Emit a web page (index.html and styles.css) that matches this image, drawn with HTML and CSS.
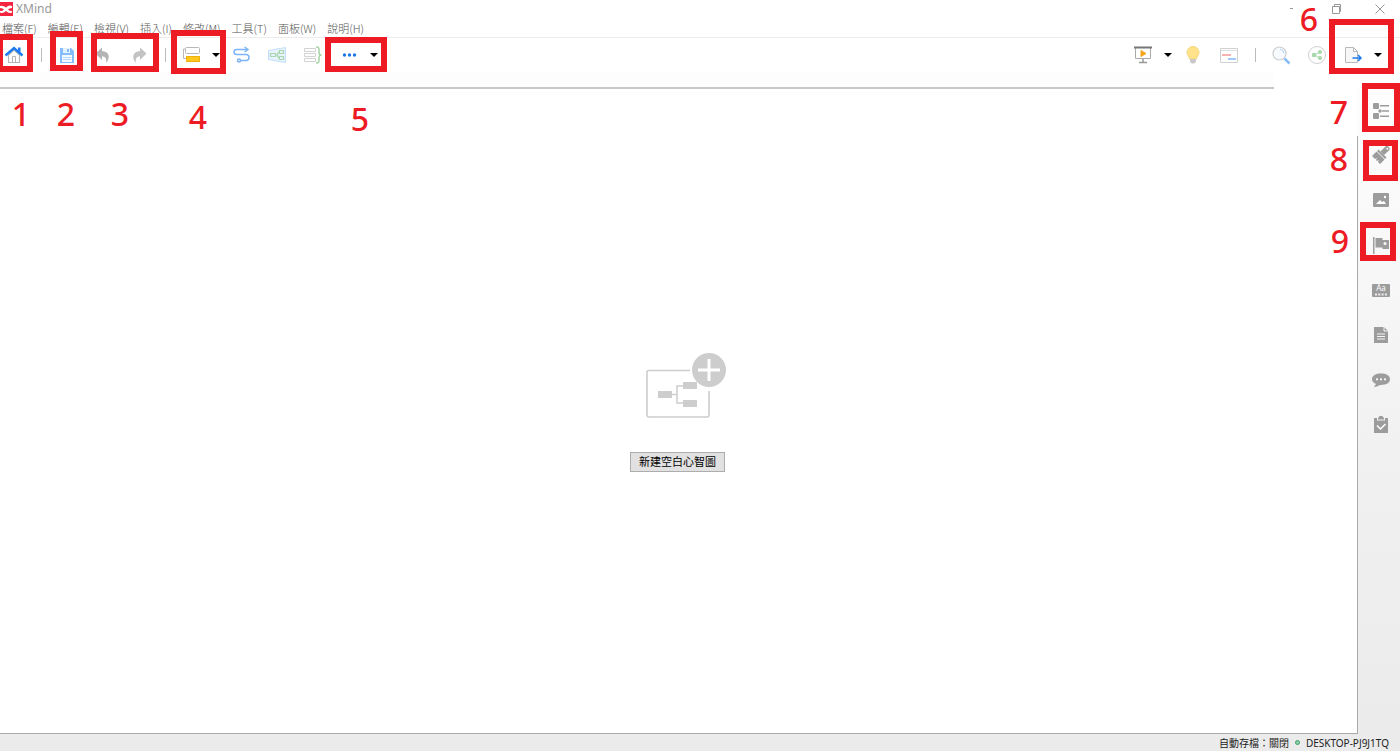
FILE: index.html
```html
<!DOCTYPE html>
<html lang="zh-Hant">
<head>
<meta charset="utf-8">
<title>XMind</title>
<link rel="stylesheet" href="styles.css">
</head>
<body>
<div class="app">
  <header class="titlebar">
    <svg class="logo" width="13" height="14" viewBox="0 0 13 14"><path fill="#f5253f" d="M0 0h13v14H0z"/><path fill="#fff" d="M0 4q3-1 6 1.500 3-3 6-1.500v2q-3 0-4 1.500 1 1.500 4 1.500v1.500q-3 1.500-6-1.500-3 3-6 1.500V9q3 0 4-1.500Q3 6 0 6z"/></svg>
    <h1 class="title">XMind</h1>
    <div class="window-controls">
      <button class="win" aria-label="最小化"><svg width="12" height="12" viewBox="0 0 12 12"><path d="M4 5.500h3" stroke="#999"/></svg></button>
      <button class="win" aria-label="還原"><svg width="12" height="12" viewBox="0 0 12 12" fill="none" stroke="#999"><path d="M2.500 3.500h7v7h-7zM4.500 3V1.500h6v7H10"/></svg></button>
      <button class="win" aria-label="關閉"><svg width="12" height="12" viewBox="0 0 12 12"><path d="M1.500 1.500l9 9M10.500 1.500l-9 9" stroke="#999"/></svg></button>
    </div>
  </header>

  <nav class="menubar">
    <button class="menu">檔案(F)</button>
    <button class="menu">編輯(E)</button>
    <button class="menu">檢視(V)</button>
    <button class="menu">插入(I)</button>
    <button class="menu">修改(M)</button>
    <button class="menu">工具(T)</button>
    <button class="menu">面板(W)</button>
    <button class="menu">說明(H)</button>
  </nav>

  <div class="toolbar">
    <button class="tool home" aria-label="首頁"><svg width="20" height="20" viewBox="0 0 20 20" fill="none"><path d="M4.500 10v7.500h11V10L10 5z" fill="#fff" stroke="#b5b5b5" stroke-width="1.200"/><path d="M8.500 17.500v-6h3v6" stroke="#b5b5b5"/><path d="M1.500 10.500L10 3l8.500 7.500" stroke="#1a7af0" stroke-width="2.400"/><path d="M14 2.500h2.500v5L14 5.500z" fill="#1a7af0"/></svg></button>
    <span class="sep"></span>
    <button class="tool" aria-label="儲存"><svg width="18" height="18" viewBox="0 0 18 18"><path d="M2 2h11l3 3v12H2z" fill="#84beff"/><path d="M5 2h7v5H5z" fill="#e4f1ff"/><path d="M9 3h2v3H9z" fill="#84beff"/><path d="M4 9h10v7H4z" fill="#f4faff"/><path d="M5 11.500h8M5 13.500h8" stroke="#b5d8ff"/></svg></button>
    <button class="tool" aria-label="復原"><svg width="18" height="18" viewBox="0 0 18 18"><path d="M1.500 7.500L8 1.500v3.500c7 .3 9 6.500 4 12 1-5-1-6.500-4-6.500V14z" fill="#b4b4b4"/></svg></button>
    <button class="tool" aria-label="重做"><svg width="18" height="18" viewBox="0 0 18 18"><path d="M16.500 7.500L10 1.500v3.500C3 5.300 1 11.500 6 17c-1-5 1-6.500 4-6.500V14z" fill="#c3c3c3"/></svg></button>
    <span class="sep"></span>
    <button class="tool" aria-label="主題"><svg width="20" height="18" viewBox="0 0 20 18" fill="none"><path d="M4 3H2.500v9.500H5" stroke="#b8b8b8"/><rect x="4.500" y="1.500" width="14" height="6" rx="1" fill="#fff" stroke="#b8b8b8"/><rect x="5.500" y="10.500" width="13" height="5" fill="#ffc61e" stroke="#eeb20d"/></svg></button>
    <button class="drop" aria-label="主題選項"></button>
    <button class="tool" aria-label="聯繫"><svg width="18" height="18" viewBox="0 0 18 18" fill="none" stroke="#7db5f7" stroke-width="1.500"><path d="M15 3.500H4.500a2.500 2.500 0 0 0 0 5h9.500a3 3 0 0 1 0 6H8.500"/><path d="M12.500 1l3.500 2.500L12.500 6"/><circle cx="7" cy="14.500" r="1.500"/></svg></button>
    <button class="tool" aria-label="外框"><svg width="20" height="18" viewBox="0 0 20 18" fill="none"><path d="M1.500 4.500l17-3v15l-17-3z" fill="#e7f3ff" stroke="#c3ddf8"/><path d="M3.500 7.500h5v3h-5zM12.500 4.500h4v3h-4zM12.500 10.500h4v3h-4zM8.500 9h2M12.500 6c-2 0-2 1-2 3s0 3 2 3" stroke="#a9d6ac" stroke-width="1.200"/></svg></button>
    <button class="tool" aria-label="摘要"><svg width="20" height="18" viewBox="0 0 20 18" fill="none"><path d="M1.500 2.500h11v3h-11zM1.500 7.500h11v3h-11zM1.500 12.500h11v3h-11z" stroke="#d3d3d3"/><path d="M13 1c3 0 3 1 3 4s0 4 2.500 4c-2.500 0-2.500 1-2.500 4s0 4-3 4" stroke="#a5d3a3" stroke-width="1.500"/></svg></button>
    <button class="tool" aria-label="更多"><svg width="18" height="18" viewBox="0 0 18 18" fill="#1c78ea"><circle cx="4.500" cy="9" r="1.700"/><circle cx="9.500" cy="9" r="1.700"/><circle cx="14.500" cy="9" r="1.700"/></svg></button>
    <button class="drop" aria-label="更多選項"></button>
    <span class="spacer"></span>
    <button class="tool" aria-label="簡報"><svg width="20" height="18" viewBox="0 0 20 18" fill="none"><path d="M2.500 2v10.500h15V2" stroke="#aaa"/><path d="M1 1.500h18" stroke="#777" stroke-width="2"/><path d="M10 13v3M6 16.500h8" stroke="#999" stroke-width="1.500"/><path d="M8 4.500l5 3-5 3z" fill="#f8a51e" stroke="#f8a51e"/></svg></button>
    <button class="drop" aria-label="簡報選項"></button>
    <button class="tool" aria-label="腦力激盪"><svg width="18" height="20" viewBox="0 0 18 20"><path d="M9 1.500a6 6 0 0 1 6 6c0 3-2.500 4-2.500 6.500h-7c0-2.500-2.500-3.500-2.500-6.500a6 6 0 0 1 6-6z" fill="#ffe28a" stroke="#f4d67b"/><path d="M6 14h6v3l-2 1.500H8L6 17z" fill="#c9c9c9"/></svg></button>
    <button class="tool" aria-label="甘特圖"><svg width="20" height="18" viewBox="0 0 20 18" fill="none"><path d="M1.500 2.500h17v14h-17z" stroke="#d1d1d1"/><path d="M2 4.500h16" stroke="#e0e0e0"/><path d="M3 9h9" stroke="#f49a9a" stroke-width="1.500"/><path d="M9 13h8" stroke="#80b8f6" stroke-width="1.500"/></svg></button>
    <span class="sep"></span>
    <button class="tool" aria-label="搜尋"><svg width="20" height="20" viewBox="0 0 20 20" fill="none"><circle cx="8.500" cy="8.500" r="6.500" fill="#f7fbff" stroke="#ccc" stroke-width="1.200"/><path d="M9 4a5 5 0 0 1 4 4" stroke="#a9cff7"/><path d="M13.500 13.500l5 5" stroke="#88bdf8" stroke-width="2.500"/></svg></button>
    <button class="tool" aria-label="分享"><svg width="20" height="20" viewBox="0 0 20 20" fill="none"><circle cx="10" cy="10" r="8.500" stroke="#d0d0d0"/><path d="M13 7l-6 3 6 3" stroke="#a5d7a8"/><g fill="#a5d7a8"><circle cx="13" cy="7" r="2"/><circle cx="7" cy="10" r="2.200"/><circle cx="13" cy="13" r="2"/></g></svg></button>
    <button class="tool" aria-label="匯出"><svg width="20" height="18" viewBox="0 0 20 18" fill="none"><path d="M2.500 1.500h8l4 4v11h-12z" fill="#f7f7f7" stroke="#b9b9b9"/><path d="M10.500 1.500v4h4" stroke="#b9b9b9"/><path d="M9.500 12h8M15 9l3 3-3 3" stroke="#1c7cee" stroke-width="1.500"/></svg></button>
    <button class="drop" aria-label="匯出選項"></button>
  </div>
  <div class="tabstrip"></div>

  <div class="workspace">
    <main class="editor">
      <svg width="96" height="66" viewBox="0 0 96 66" fill="none"><path d="M60 17.500H19a2 2 0 0 0-2 2V62a2 2 0 0 0 2 2h58a2 2 0 0 0 2-2V38" stroke="#cdcdcd" stroke-width="1.600"/><path d="M28 38h14v7H28zM53 29h14v7H53zM53 47h14v7H53z" fill="#cdcdcd"/><path d="M42 41.500h5M53 33h-6v17h6" stroke="#cdcdcd" stroke-width="1.500"/><circle cx="79" cy="17" r="17" fill="#cdcdcd"/><path d="M79 6v22M68 17h22" stroke="#fff" stroke-width="3"/></svg>
      <button class="create">新建空白心智圖</button>
    </main>
    <aside class="sidebar">
      <button class="panel" aria-label="大綱"><svg width="18" height="18" viewBox="0 0 18 18" fill="#9c9c9c"><rect x="1" y="1" width="6" height="6" rx="1"/><circle cx="8" cy="9" r="1.700"/><rect x="1" y="11" width="6" height="6" rx="1"/><path d="M8 3h9v1.500H8zM10 8.300h7v1.500h-7zM8 13.500h9V15H8z"/></svg></button>
      <button class="panel" aria-label="格式"><svg width="20" height="20" viewBox="0 0 20 20" fill="#9c9c9c"><path d="M7.500 4.500l8 8-1.500 1.500-8-8z"/><path d="M5.500 6.500l8 8L9 19l-2-2 1-2-2 1-1-1 1-2-2 1-3-3z"/><path d="M9.500 6.500l5-5c1.500-1.500 5 1 4 3.500l-5.500 5z"/><circle cx="16.300" cy="3.700" r="1" fill="#f8f8f8"/></svg></button>
      <button class="panel" aria-label="圖片"><svg width="18" height="18" viewBox="0 0 18 18"><rect x="1" y="2" width="16" height="14" rx="1" fill="#9c9c9c"/><path d="M4 13l4-4 2 2 2-1 2 3z" fill="#fff"/><circle cx="13" cy="6" r="1.200" fill="#fff"/></svg></button>
      <button class="panel" aria-label="圖標"><svg width="18" height="18" viewBox="0 0 18 18" fill="#9c9c9c"><path d="M1 1h1.500v17H1zM3.500 2h7v2H17v9h-6.500v-1.500h-7z"/><circle cx="13" cy="7.500" r="1.500" fill="#f8f8f8"/></svg></button>
      <button class="panel" aria-label="標籤"><svg width="18" height="18" viewBox="0 0 18 18"><rect y="3" width="18" height="13" rx="1" fill="#9c9c9c"/><text class="aa" x="9" y="10" text-anchor="middle">Aa</text><path d="M3 13.500h13" stroke="#eee" stroke-width="2" stroke-dasharray="2 1.300"/></svg></button>
      <button class="panel" aria-label="備註"><svg width="18" height="18" viewBox="0 0 18 18"><path d="M2 1h10l4 4v12H2z" fill="#9c9c9c"/><path d="M12 1v4h4M5 8h8M5 10.500h8M5 13h8" fill="none" stroke="#f5f5f5"/></svg></button>
      <button class="panel" aria-label="註解"><svg width="18" height="18" viewBox="0 0 18 18"><path d="M9 2.500c5 0 9 2 9 5.800S14 14 9 14c-2 0-4 2-7 2l2-3C1.500 12 0 10.500 0 8.300 0 4.500 4 2.500 9 2.500z" fill="#9c9c9c"/><g fill="#fff"><circle cx="5" cy="8.300" r="1.100"/><circle cx="9" cy="8.300" r="1.100"/><circle cx="13" cy="8.300" r="1.100"/></g></svg></button>
      <button class="panel" aria-label="任務資訊"><svg width="18" height="18" viewBox="0 0 18 18"><path d="M2 2h3v2.500h8V2h3v15H2zM6 1.500h1a2 2 0 0 1 4 0h1v2H6z" fill="#9c9c9c"/><path d="M5 9.500l3.500 3.500 5-5" fill="none" stroke="#fff" stroke-width="1.500"/></svg></button>
    </aside>
  </div>

  <footer class="statusbar">
    <span>自動存檔：關閉</span>
    <span class="online"></span>
    <span>DESKTOP-PJ9J1TQ</span>
  </footer>

  <div class="mark box b1"></div><div class="mark num n1">1</div>
  <div class="mark box b2"></div><div class="mark num n2">2</div>
  <div class="mark box b3"></div><div class="mark num n3">3</div>
  <div class="mark box b4"></div><div class="mark num n4">4</div>
  <div class="mark box b5"></div><div class="mark num n5">5</div>
  <div class="mark box b6"></div><div class="mark num n6">6</div>
  <div class="mark box b7"></div><div class="mark num n7">7</div>
  <div class="mark box b8"></div><div class="mark num n8">8</div>
  <div class="mark box b9"></div><div class="mark num n9">9</div>
</div>
</body>
</html>
```
FILE: styles.css
```css
* { box-sizing: border-box; }
body { margin: 0; font: 11px/16px "Noto Sans", "Noto Sans CJK TC", sans-serif; color: #222; background: #fff; }
button { font: inherit; color: inherit; border: 0; padding: 0; background: none; white-space: nowrap; }
svg { display: block; flex: none; }
.app { position: relative; display: flex; flex-direction: column; min-height: 100vh; }

.titlebar { display: flex; align-items: center; height: 18px; }
.title { margin: 0 0 0 3px; font-size: 12px; font-weight: 400; color: #999; }
.window-controls { display: flex; gap: 32px; margin-left: auto; padding-right: 14px; }
.win { width: 12px; height: 12px; }

.menubar { display: flex; gap: 11px; height: 20px; padding: 2px 0 0 2px; border-bottom: 1px solid #ececec; color: #555; font-family: "Noto Sans CJK TC", sans-serif; font-weight: 300; }
.menu { height: 16px; }

.toolbar { display: flex; align-items: center; height: 34px; padding-right: 15px; }
.tool { display: flex; align-items: center; justify-content: center; width: 36px; height: 24px; }
.home { width: 33px; padding-right: 5px; }
.sep { width: 16px; height: 14px; background: linear-gradient(#bbb, #bbb) center / 1px 100% no-repeat; }
.drop { display: flex; justify-content: center; width: 14px; height: 4px; }
.drop::before { content: ""; border: 4px solid transparent; border-top-color: #000; border-bottom: 0; }
.spacer { flex: 1; }
.tabstrip { height: 17px; margin-right: 126px; background: #fdfdfd; border-bottom: 2px solid #c8c8c8; }

.workspace { display: flex; flex: 1; }
.editor { display: flex; flex: 1; flex-direction: column; align-items: center; justify-content: center; gap: 33px; padding: 2px 2px 0 0; border-bottom: 1px solid #aaa; }
.create { height: 20px; padding: 0 8px 2px; border: 1px solid #adadad; background: #e1e1e1; color: #000; font: 11px/16px "Noto Sans CJK TC", sans-serif; }
.sidebar { display: flex; flex-direction: column; width: 43px; padding-left: 4px;
  background: linear-gradient(#aaa, #aaa) 0 47px / 1px 100% no-repeat, linear-gradient(#fdfdfd, #f0f0f0 60%, #ebebeb); }
.panel { display: flex; align-items: center; justify-content: center; height: 45px; }
.panel:first-child { height: 43px; }
.aa { font: 8px "Noto Sans", sans-serif; fill: #fff; }

.statusbar { display: flex; align-items: center; justify-content: flex-end; gap: 6px; height: 17px; padding-right: 11px; background: #ebebeb; font-size: 10px; }
.online { width: 5px; height: 5px; border: 1px solid #3f9d68; border-radius: 50%; background: #8fd0a8; }

.mark { position: absolute; pointer-events: none; }
.box { border: 6px solid #ed1c24; }
.num { width: 24px; text-align: center; color: #ed1c24; font: 500 32px/32px "Noto Sans", sans-serif; }
.b1 { left: -3px; top: 34px; width: 36px; height: 38px; }
.b2 { left: 50px; top: 31px; width: 33px; height: 40px; }
.b3 { left: 91px; top: 33px; width: 68px; height: 39px; }
.b4 { left: 171px; top: 30px; width: 55px; height: 44px; }
.b5 { left: 325px; top: 37px; width: 62px; height: 35px; }
.b6 { right: 6px; top: 19px; width: 65px; height: 55px; }
.b7 { right: 0; top: 83px; width: 38px; height: 49px; }
.b8 { right: 2px; top: 140px; width: 35px; height: 41px; }
.b9 { right: 4px; top: 222px; width: 36px; height: 39px; }
.n1 { left: 9px; top: 98px; }
.n2 { left: 54px; top: 98px; }
.n3 { left: 108px; top: 98px; }
.n4 { left: 186px; top: 101px; }
.n5 { left: 348px; top: 103px; }
.n6 { right: 79px; top: 3px; }
.n7 { right: 49px; top: 96px; }
.n8 { right: 49px; top: 143px; }
.n9 { right: 48px; top: 225px; }
```
